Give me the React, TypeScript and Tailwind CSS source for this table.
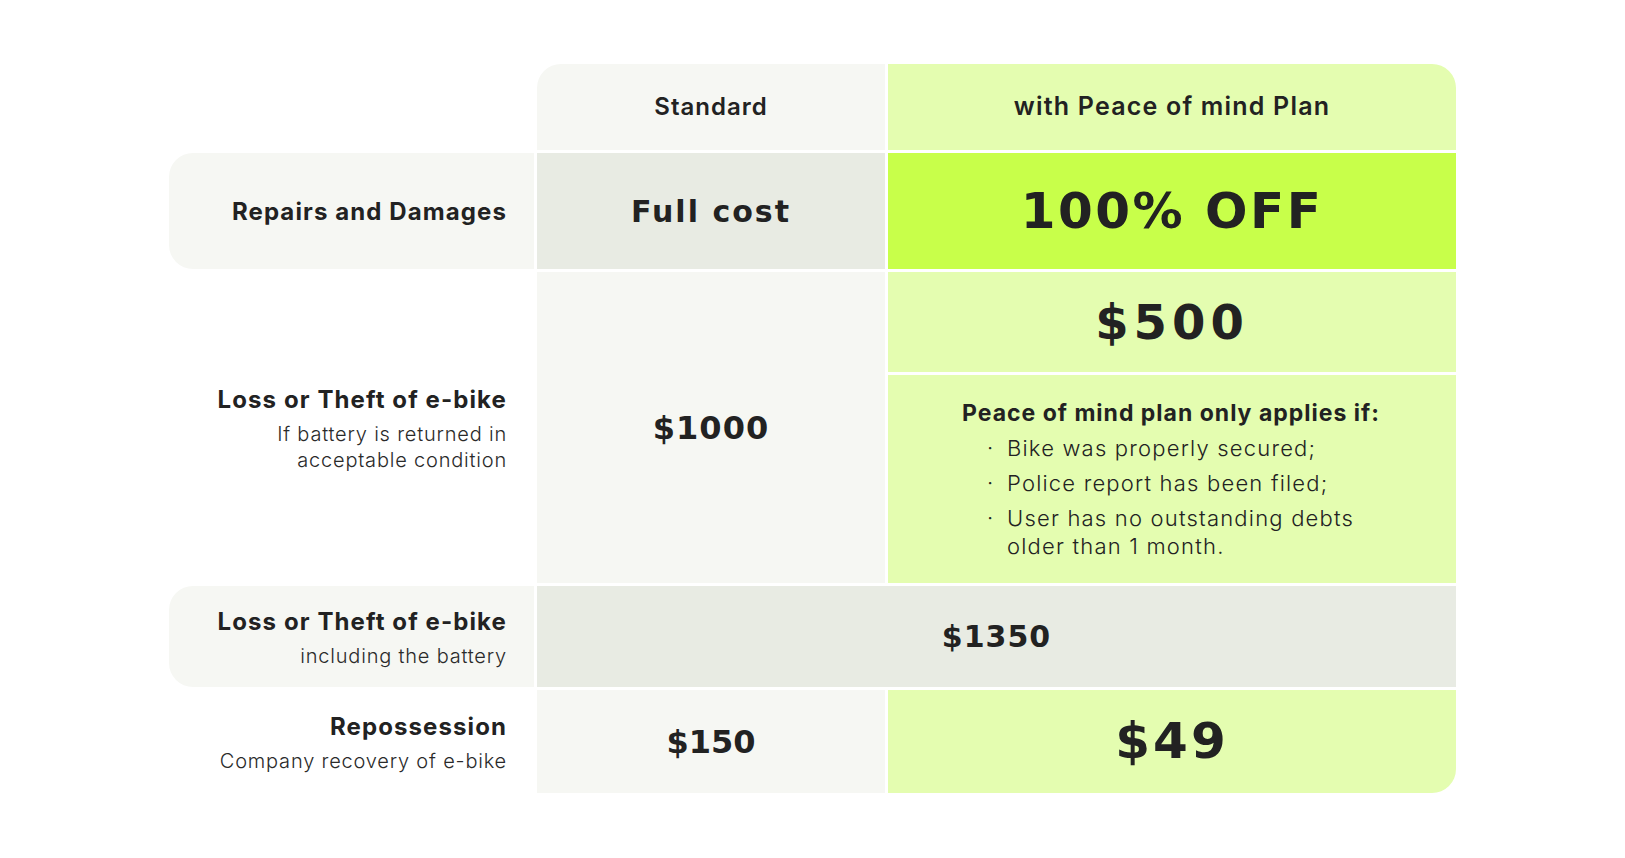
import React from "react";

const label = "font-['Inter','Liberation_Sans',sans-serif]";
const display = "font-['DejaVu_Sans','Liberation_Sans',sans-serif] font-bold";

function Label({ title, sub, bg, rounded }: { title: string; sub?: string[]; bg?: boolean; rounded?: boolean }) {
  return (
    <div
      className={`flex flex-col items-end justify-center pr-[27px] text-right ${bg ? "bg-[#f6f7f3]" : ""} ${rounded ? "rounded-l-[24px]" : ""}`}
    >
      <div className={`${label} mt-[2px] text-[24px] leading-[30px] font-bold tracking-[1.1px] text-[#222222]`}>{title}</div>
      {sub && (
        <div className={`${label} mt-[6px] text-[20px] leading-[26px] font-light tracking-[0.8px] text-[#2a2a2a]`}>
          {sub.map((s) => (
            <div key={s}>{s}</div>
          ))}
        </div>
      )}
    </div>
  );
}

export default function App() {
  return (
    <div className="min-h-[858px] w-full bg-white pt-[64px]">
      <div className="mx-auto grid w-[1287px] grid-cols-[365px_348px_568px] grid-rows-[86px_116px_100px_208px_101px_103px] gap-[3px] text-[#222222]">
        {/* header */}
        <div />
        <div className={`flex items-center justify-center rounded-tl-[24px] bg-[#f6f7f3] ${label} text-[24px] font-semibold tracking-[1px]`}>
          Standard
        </div>
        <div className={`flex items-center justify-center rounded-tr-[24px] bg-[#e4fdb0] ${label} text-[25px] font-semibold tracking-[1.2px]`}>
          with Peace of mind Plan
        </div>

        {/* row 1 */}
        <Label title="Repairs and Damages" bg rounded />
        <div className={`flex items-center justify-center bg-[#e8ebe3] ${display} text-[30px] tracking-[2px]`}>Full cost</div>
        <div className={`flex items-center justify-center bg-[#c8ff4a] ${display} text-[50px] tracking-[2.5px]`}>100% OFF</div>

        {/* row 2 */}
        <div className="row-span-2 flex">
          <div className="flex flex-1 flex-col items-end justify-center">
            <Label title="Loss or Theft of e-bike" sub={["If battery is returned in", "acceptable condition"]} />
          </div>
        </div>
        <div className={`row-span-2 flex items-center justify-center bg-[#f6f7f3] ${display} text-[32px] tracking-[1px]`}>$1000</div>
        <div className={`flex items-center justify-center bg-[#e4fdb0] ${display} text-[48px] tracking-[5px]`}>$500</div>
        <div className="flex items-center justify-center bg-[#e4fdb0]">
          <div className="w-[420px]">
            <div className={`${label} whitespace-nowrap text-[23px] leading-[28px] font-bold tracking-[1px]`}>
              Peace of mind plan only applies if:
            </div>
            <ul className={`${label} mt-[7px] flex flex-col gap-[7px] text-[22px] leading-[28px] font-light tracking-[1.2px]`}>
              {["Bike was properly secured;", "Police report has been filed;", "User has no outstanding debts older than 1 month."].map((t) => (
                <li key={t} className="flex">
                  <span className="w-[45px] shrink-0 pl-[25px]">·</span>
                  <span className="w-[372px]">{t}</span>
                </li>
              ))}
            </ul>
          </div>
        </div>

        {/* row 3 */}
        <Label title="Loss or Theft of e-bike" sub={["including the battery"]} bg rounded />
        <div className={`col-span-2 flex items-center justify-center bg-[#e8ebe3] ${display} text-[30px] tracking-[1px]`}>$1350</div>

        {/* row 4 */}
        <Label title="Repossession" sub={["Company recovery of e-bike"]} />
        <div className={`flex items-center justify-center bg-[#f6f7f3] ${display} text-[32px]`}>$150</div>
        <div className={`flex items-center justify-center rounded-br-[24px] bg-[#e4fdb0] ${display} text-[50px] tracking-[3px]`}>$49</div>
      </div>
    </div>
  );
}
